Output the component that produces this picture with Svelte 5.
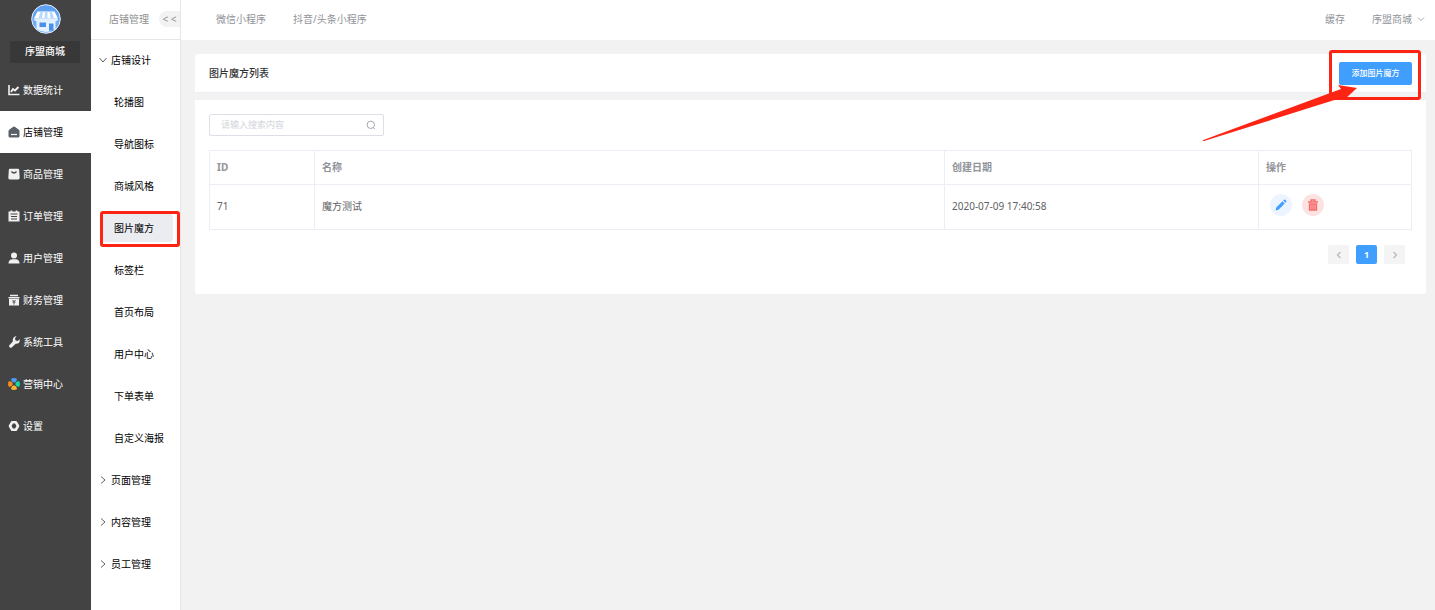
<script lang="ts">
	const navItems = [
		{ label: '数据统计', icon: 'chart' },
		{ label: '店铺管理', icon: 'shop' },
		{ label: '商品管理', icon: 'goods' },
		{ label: '订单管理', icon: 'order' },
		{ label: '用户管理', icon: 'user' },
		{ label: '财务管理', icon: 'finance' },
		{ label: '系统工具', icon: 'tool' },
		{ label: '营销中心', icon: 'market' },
		{ label: '设置', icon: 'setting' }
	];

	const groups = [
		{
			label: '店铺设计',
			children: [
				'轮播图',
				'导航图标',
				'商城风格',
				'图片魔方',
				'标签栏',
				'首页布局',
				'用户中心',
				'下单表单',
				'自定义海报'
			]
		},
		{ label: '页面管理', children: [] },
		{ label: '内容管理', children: [] },
		{ label: '员工管理', children: [] }
	];

	const rows = [{ id: 71, name: '魔方测试', date: '2020-07-09 17:40:58' }];

	let activeNav = $state('店铺管理');
	let activeSub = $state('图片魔方');
	let opened = $state('店铺设计');
	let keyword = $state('');

	let filtered = $derived(rows.filter((row) => row.name.includes(keyword)));
</script>

{#snippet navIcon(name: string)}
	<svg class="nav-icon" viewBox="0 0 12 12" fill="currentColor" aria-hidden="true">
		{#if name === 'chart'}
			<path d="M1 1v9.5h10.5" fill="none" stroke="currentColor" stroke-width="1.6" />
			<path d="M3 8l2-3 2 1.5L10.5 3" fill="none" stroke="currentColor" stroke-width="1.9" />
		{:else if name === 'shop'}
			<path d="M6 .5Q7 .5 11 4q.5.5.5 1.2V10q0 1.5-1.5 1.5H2Q.5 11.5.5 10V5.2Q.5 4.5 1 4 5 .5 6 .5z" />
			<path d="M3 8.5h6" stroke="#fff" stroke-width="1.2" />
		{:else if name === 'goods'}
			<path d="M2 .8h8q1 0 1.2 1l.5 8q0 1.7-1.5 1.7H1.8Q.3 11.5.3 9.8l.5-8Q1 .8 2 .8z" />
			<path d="M3.5 3.5q2.5 3 5 0" fill="none" stroke="#434343" stroke-width="1.3" />
		{:else if name === 'order'}
			<path d="M.5 1.5h2V.5h1.8v1h3.4V.5h1.8v1h2v10H.5z" />
			<path d="M2.5 4h7M3 6.5h6M3 9h6" stroke="#434343" stroke-width="1" />
		{:else if name === 'user'}
			<circle cx="6" cy="3.5" r="3" />
			<path d="M.5 11.5q0-4 4-4.2h3q4 .2 4 4.2z" />
		{:else if name === 'finance'}
			<path d="M2 .8h8v1.500H2zM.5 3h11v1.500H.5zM1 5h10v6.500H1z" />
			<path d="M4.500 6l1.500 1.500L7.500 6M4.500 8h3M6 7.500v3" fill="none" stroke="#434343" stroke-width=".9" />
		{:else if name === 'tool'}
			<path d="M8.500.3L7 2.200l.5 2.200 2.200.6 2-1.700q.5 4.700-4 4.400L4 11.300q-1.300 1-2.400 0-1.200-1.200 0-2.400L4.800 5.500Q4.300.6 8.500.3z" />
		{:else if name === 'market'}
			<path d="M2.900 1Q6-.9 9.100 1L8 3.800 6.600 4.600H5.400L4 3.800z" fill="#4a9df8" />
			<path d="M1 2.900Q-.9 6 1 9.100L3.800 8l.8-1.400V5.400L3.800 4z" fill="#ff8d18" />
			<path d="M11 2.900Q12.900 6 11 9.100L8.200 8l-.8-1.400V5.400L8.200 4z" fill="#13d8a7" />
			<path d="M2.900 11Q6 12.900 9.100 11L8 8.200 6.600 7.400H5.400L4 8.200z" fill="#fdb52b" />
		{:else}
			<path d="M4.200 2.200h3.600L10 6 7.800 9.800H4.200L2 6z" fill="none" stroke="currentColor" stroke-width="2.600" stroke-linejoin="round" />
		{/if}
	</svg>
{/snippet}

<div class="layout">
	<aside class="sidebar">
		<svg class="logo" viewBox="0 0 30 30" aria-hidden="true">
			<defs>
				<linearGradient id="sky" x1="0" y1="0" x2="0" y2="1">
					<stop offset="0" stop-color="#5b9df0" />
					<stop offset="1" stop-color="#7bb5f8" />
				</linearGradient>
			</defs>
			<circle cx="15" cy="15" r="14.300" fill="url(#sky)" stroke="#e3eefb" />
			<path d="M5.500 16h19v9q-9.500 6-19 0z" fill="#e6f2ff" />
			<path d="M6.500 7.500h17l3.500 7H3z" fill="#fff" />
			<path d="M9.500 7.500H12l-1 7H7.500zM14 7.500h2.500v7h-3zM18.500 7.500H21l2 7h-3.500z" fill="#b9d9fb" />
			<path d="M3 14.500h24q0 2.700-2.500 2.700-1.800 0-2.500-1-1 1.300-2.400 1.300T17.300 16.200Q16.400 17.500 15 17.500T12.700 16.200Q11.800 17.500 10.400 17.500T8 16.200Q7.300 17.200 5.500 17.200 3 17.200 3 14.500z" fill="#e1effe" />
			<path d="M8.500 18.500h6.500v4.500H8.500zM18 19.500h4.500v7.300H18z" fill="#4a90e8" />
		</svg>
		<div class="shop-name">序盟商城</div>
		<nav>
			{#each navItems as item}
				<button class="nav-item" class:active={activeNav === item.label} onclick={() => (activeNav = item.label)}>
					{@render navIcon(item.icon)}
					<span>{item.label}</span>
				</button>
			{/each}
		</nav>
	</aside>

	<aside class="submenu">
		<div class="submenu-head">
			<span>店铺管理</span>
			<button class="collapse">&lt;&nbsp;&lt;</button>
		</div>
		{#each groups as group}
			<button class="group" onclick={() => (opened = opened === group.label ? '' : group.label)}>
				<svg class="arrow" class:open={opened === group.label} viewBox="0 0 8 8" aria-hidden="true">
					<path d="M2 .5L6 4 2 7.500" fill="none" stroke="#505050" stroke-width=".9" />
				</svg>
				<span>{group.label}</span>
			</button>
			{#if opened === group.label}
				{#each group.children as child}
					<button class="sub-item" class:active={activeSub === child} onclick={() => (activeSub = child)}>
						<span>{child}</span>
					</button>
				{/each}
			{/if}
		{/each}
	</aside>

	<div class="main">
		<header class="topbar">
			<a href="#wechat">微信小程序</a>
			<a href="#douyin">抖音/头条小程序</a>
			<div class="account">
				<a href="#cache">缓存</a>
				<button class="account-btn">
					序盟商城
					<svg viewBox="0 0 8 8" aria-hidden="true">
						<path d="M1 2.500l3 3 3-3" fill="none" stroke="#909399" stroke-width=".8" />
					</svg>
				</button>
			</div>
		</header>

		<main class="content">
			<section class="title-card">
				<h1>图片魔方列表</h1>
				<div class="add-wrap">
					<button class="add-btn">添加图片魔方</button>
					<svg class="pointer" viewBox="0 0 156 56" aria-hidden="true">
						<path d="M0 55.500L139 4l-3-4 19 3-12 11-1-2L2 56z" fill="#fe2413" />
					</svg>
				</div>
			</section>

			<section class="list-card">
				<label class="search">
					<input type="text" placeholder="请输入搜索内容" aria-label="请输入搜索内容" bind:value={keyword} />
					<svg viewBox="0 0 10 10" aria-hidden="true">
						<circle cx="4.800" cy="4.800" r="3.700" fill="none" stroke="#9a9da4" stroke-width=".9" />
						<path d="M7.300 7.500l1.500 1.500" stroke="#9a9da4" stroke-width=".9" />
					</svg>
				</label>

				<table>
					<thead>
						<tr>
							<th class="col-id">ID</th>
							<th class="col-name">名称</th>
							<th class="col-date">创建日期</th>
							<th>操作</th>
						</tr>
					</thead>
					<tbody>
						{#each filtered as row}
							<tr>
								<td>{row.id}</td>
								<td>{row.name}</td>
								<td>{row.date}</td>
								<td>
									<div class="actions">
										<button class="edit" aria-label="编辑">
											<svg viewBox="0 0 12 12" fill="#409eff" aria-hidden="true">
												<path d="M.5 11.500l.8-3L7.500 2.300l2.200 2.200-6.200 6.200zM8.200 1.600l.8-.8q.7-.5 1.300 0l.9.9q.5.700 0 1.300l-.8.8z" />
											</svg>
										</button>
										<button class="remove" aria-label="删除">
											<svg viewBox="0 0 12 12" fill="none" stroke="#f56c6c" aria-hidden="true">
												<path d="M1 3h10M4 2.500v-1.500h4v1.500" stroke-width="1.300" />
												<path d="M2.500 5h7v6h-7z" fill="#f99" stroke-width="1.300" />
												<path d="M5 6v4M7 6v4" stroke-width=".7" />
											</svg>
										</button>
									</div>
								</td>
							</tr>
						{/each}
					</tbody>
				</table>

				<div class="pagination">
					<button aria-label="上一页" disabled>
						<svg viewBox="0 0 8 8" aria-hidden="true"><path d="M5.500 1L2.500 4l3 3" /></svg>
					</button>
					<button class="current">1</button>
					<button aria-label="下一页" disabled>
						<svg viewBox="0 0 8 8" aria-hidden="true"><path d="M2.500 1l3 3-3 3" /></svg>
					</button>
				</div>
			</section>
		</main>
	</div>
</div>

<style>
	:global(body) {
		background: #f2f2f2;
		font-family: 'Noto Sans', 'Noto Sans CJK SC', sans-serif;
		font-size: 10px;
		line-height: 14px;
	}

	button,
	input {
		margin: 0;
		padding: 0;
		border: 0;
		background: none;
		color: inherit;
		font: inherit;
		box-sizing: border-box;
		cursor: pointer;
	}

	a {
		color: inherit;
		text-decoration: none;
	}

	.layout {
		display: flex;
		min-height: 100vh;
	}

	.sidebar {
		flex: 0 0 91px;
		background: #434343;
		color: #fff;
	}

	.logo {
		display: block;
		width: 30px;
		height: 30px;
		margin: 4px auto 7px;
	}

	.shop-name {
		margin: 0 11px 6px 10px;
		padding-bottom: 2px;
		border-radius: 2px;
		background: #383838;
		font-weight: 500;
		line-height: 20px;
		text-align: center;
	}

	.nav-item {
		display: flex;
		align-items: center;
		gap: 3px;
		width: 100%;
		height: 42px;
		padding-left: 8px;
	}

	.nav-item.active {
		background: #fff;
		color: #000;
	}

	.nav-icon {
		width: 12px;
		height: 12px;
		color: #f0f0f0;
	}

	.active .nav-icon {
		color: #5a6068;
	}

	.submenu {
		flex: 0 0 90px;
		box-sizing: border-box;
		border-right: 1px solid #e6e6e6;
		background: #fff;
		color: #000;
	}

	.submenu-head {
		display: flex;
		align-items: center;
		justify-content: space-between;
		height: 40px;
		box-sizing: border-box;
		padding: 0 0 2px 18px;
		border-bottom: 1px solid #e6e6e6;
		color: #909090;
	}

	.collapse {
		width: 21px;
		height: 16px;
		border-radius: 8px 0 0 8px;
		background: #f2f2f2;
		white-space: nowrap;
	}

	.group,
	.sub-item {
		display: flex;
		align-items: center;
		width: 100%;
		height: 42px;
		padding-bottom: 2px;
	}

	.group {
		gap: 4px;
		padding-left: 8px;
	}

	.arrow {
		width: 8px;
		height: 8px;
	}

	.arrow.open {
		transform: rotate(90deg);
	}

	.sub-item {
		position: relative;
		padding-left: 11px;
	}

	.sub-item span {
		width: 71px;
		box-sizing: border-box;
		padding-left: 12px;
		border-radius: 3px;
		line-height: 28px;
		text-align: left;
	}

	.sub-item.active span {
		background: #ebecf0;
	}

	.sub-item.active::after,
	.add-wrap::after {
		content: '';
		position: absolute;
		border: 3px solid #fe2413;
		border-radius: 3px;
		pointer-events: none;
	}

	.sub-item.active::after {
		inset: 3px 0 3px 9px;
	}

	.main {
		flex: 1;
		min-width: 0;
	}

	.topbar {
		display: flex;
		align-items: center;
		gap: 27px;
		height: 40px;
		box-sizing: border-box;
		padding: 0 10px 2px 35px;
		background: #fff;
		color: #909399;
	}

	.account {
		display: flex;
		gap: 27px;
		margin-left: auto;
	}

	.account-btn {
		display: flex;
		align-items: center;
		gap: 5px;
	}

	.account-btn svg {
		width: 8px;
		height: 8px;
	}

	.content {
		padding: 14px 9px 14px 14px;
	}

	.title-card {
		display: flex;
		align-items: center;
		justify-content: space-between;
		height: 39px;
		box-sizing: border-box;
		margin-bottom: 7px;
		padding: 0 14px;
		border-bottom: 1px solid #ebeef5;
		border-radius: 3px 3px 0 0;
		background: #fff;
	}

	h1 {
		margin: 0;
		color: #303133;
		font-size: 10px;
		font-weight: 500;
	}

	.add-wrap {
		position: relative;
	}

	.add-wrap::after {
		inset: -12px -9px -15px -10px;
	}

	.add-btn {
		display: block;
		width: 73px;
		height: 23px;
		border-radius: 2px;
		background: #409eff;
		color: #fff;
		font-size: 8px;
		font-weight: 500;
	}

	.pointer {
		position: absolute;
		z-index: 1;
		top: 23px;
		right: 54px;
		width: 156px;
		height: 56px;
		pointer-events: none;
	}

	.list-card {
		padding: 14px 14px 30px;
		border-radius: 0 0 3px 3px;
		background: #fff;
	}

	.search {
		display: flex;
		align-items: center;
		width: 175px;
		height: 22px;
		box-sizing: border-box;
		margin-bottom: 14px;
		padding: 0 7px 0 11px;
		border: 1px solid #dcdfe6;
		border-radius: 2px;
	}

	.search input {
		flex: 1;
		min-width: 0;
		outline: none;
		color: #606266;
		font-size: 9px;
		cursor: text;
	}

	.search input::placeholder {
		color: #d2d5db;
	}

	.search svg {
		width: 10px;
		height: 10px;
	}

	table {
		width: 100%;
		border-collapse: collapse;
		table-layout: fixed;
		color: #606266;
		text-align: left;
	}

	th,
	td {
		box-sizing: border-box;
		padding: 0 7px 2px;
		border: 1px solid #ebeef5;
	}

	th {
		height: 34px;
		color: #909399;
		font-weight: 700;
	}

	td {
		height: 45px;
	}

	.col-id {
		width: 105px;
	}

	.col-name {
		width: 630px;
	}

	.col-date {
		width: 314px;
	}

	.actions {
		display: flex;
		gap: 10px;
		padding: 0 0 2px 4px;
	}

	.actions button {
		display: grid;
		place-items: center;
		width: 22px;
		height: 22px;
		border-radius: 50%;
	}

	.actions svg {
		width: 12px;
		height: 12px;
	}

	.actions .edit {
		background: #ecf5ff;
	}

	.actions .remove {
		background: #fde2e2;
	}

	.pagination {
		display: flex;
		justify-content: flex-end;
		gap: 7px;
		padding: 15px 7px 0 0;
	}

	.pagination button {
		display: grid;
		place-items: center;
		width: 21px;
		height: 19px;
		border-radius: 2px;
		background: #f4f4f5;
	}

	.pagination .current {
		background: #409eff;
		color: #fff;
		font-size: 9px;
		font-weight: 700;
	}

	.pagination svg {
		width: 8px;
		height: 8px;
		fill: none;
		stroke: #b4b8bf;
		stroke-width: 1.2;
	}
</style>
